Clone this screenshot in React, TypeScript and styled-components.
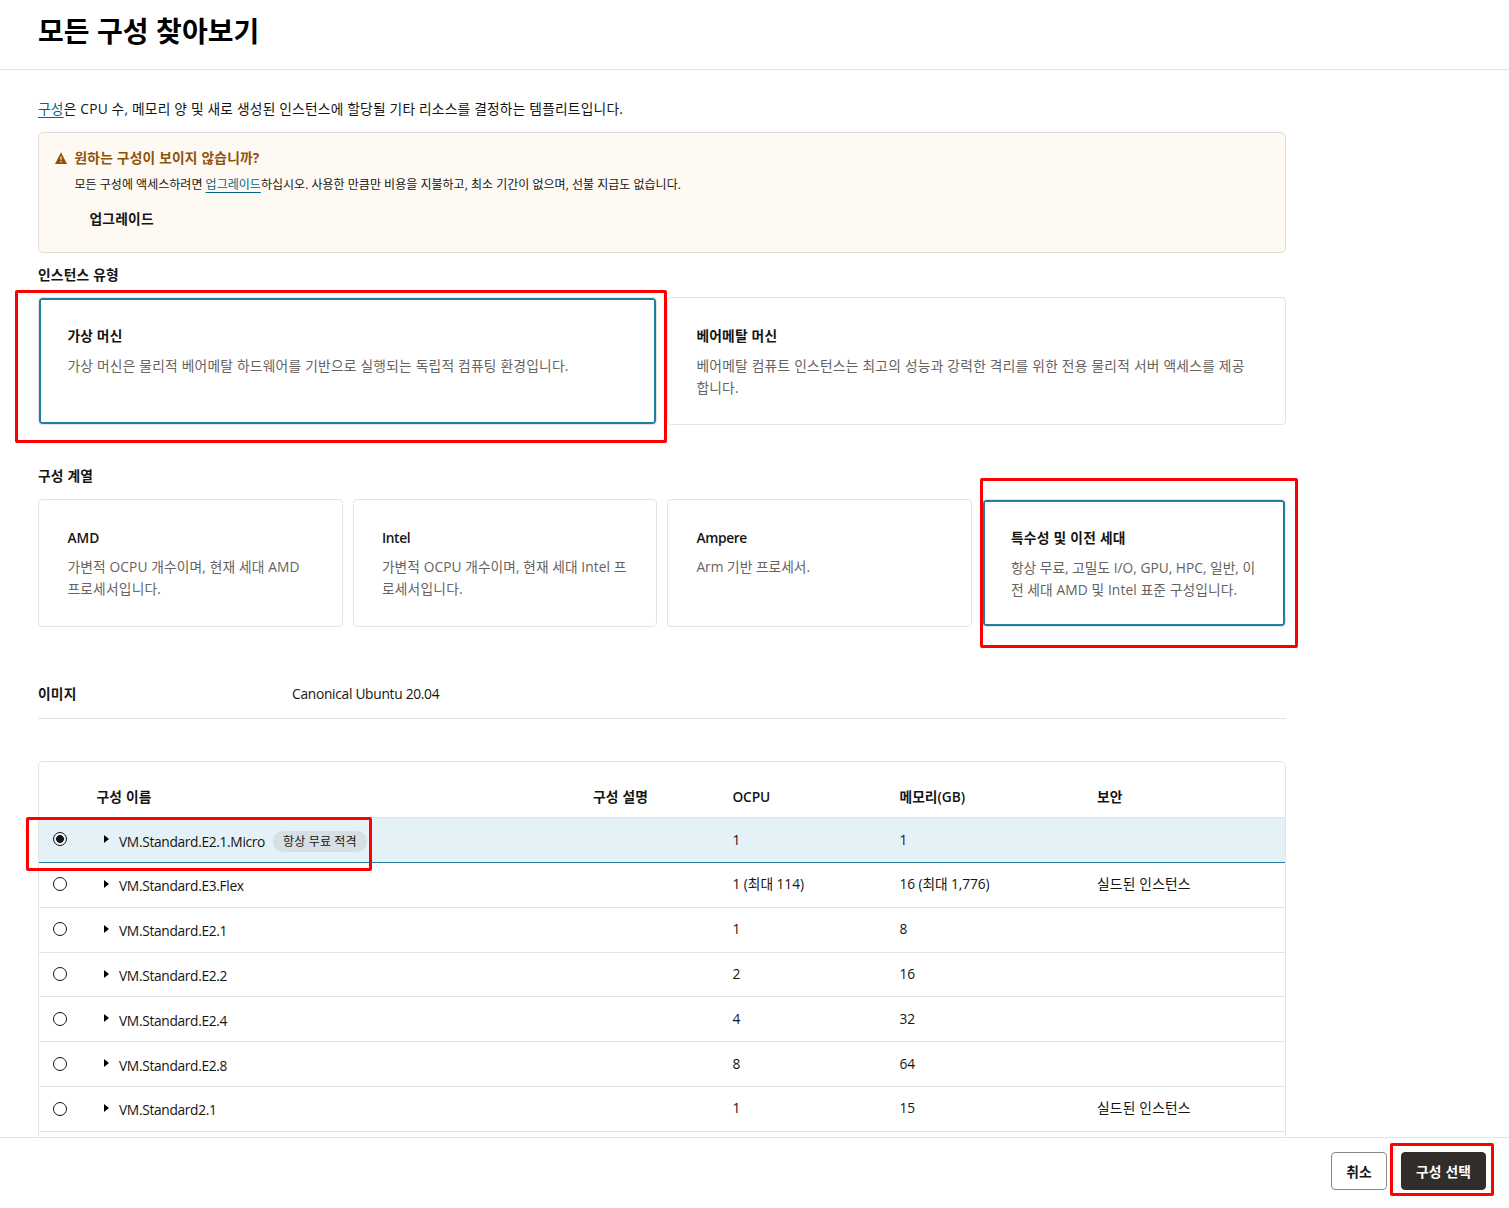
import React from 'react';
import styled, { createGlobalStyle, css } from 'styled-components';

const GlobalStyle = createGlobalStyle`
  * { box-sizing: border-box; }
  body {
    margin: 0;
    background: #fff;
    color: #161513;
    font-family: "Open Sans", "Noto Sans CJK KR", sans-serif;
    font-size: 13.76px;
  }
  p, h1, h2, h3 { margin: 0; }
`;

const line = '#e4e3e2';

type Track = { $ls?: number };
const tracking = css<Track>`
  letter-spacing: ${(p) => p.$ls ?? 0.2}px;
  white-space: nowrap;
`;

const Page = styled.div`
  position: relative;
  display: flex;
  flex-direction: column;
  width: 1509px;
  height: 1208px;
  overflow: hidden;
`;
const Header = styled.header`
  flex: none;
  height: 70px;
  padding: 11px 38px 0;
  border-bottom: 1px solid ${line};
`;
const Title = styled.h1<Track>`
  ${tracking}
  font-size: 28px;
  font-weight: 700;
  line-height: 40px;
  color: #000;
`;
const Main = styled.main`
  flex: 1;
  min-height: 0;
  width: 1324px;
  padding: 28.5px 38px 0;
  overflow: hidden;
`;
const Link = styled.a`
  color: #00688c;
  text-decoration: underline;
  text-decoration-thickness: 1px;
  text-decoration-skip-ink: none;
  text-underline-offset: 3px;
`;
const Intro = styled.p<Track>`
  ${tracking}
  height: 33.5px;
  line-height: 20px;
`;
const Notice = styled.section`
  display: flex;
  height: 121px;
  padding: 14.5px 15px 0;
  gap: 7.5px;
  border: 1px solid #dfdcd6;
  border-radius: 5px;
  background: #fef9f2;
`;
const WarningIcon = styled.svg`
  flex: none;
  width: 12px;
  height: 12px;
  margin: 4.5px 0.5px 0;
`;
const NoticeTitle = styled.h2<Track>`
  ${tracking}
  font-size: 13.76px;
  line-height: 20px;
  color: #8f520a;
`;
const NoticeText = styled.p<Track>`
  ${tracking}
  margin-top: 7.5px;
  font-size: 12px;
  line-height: 20px;
`;
const NoticeAction = styled.button<Track>`
  ${tracking}
  display: block;
  margin: 13.5px 0 0 15px;
  padding: 0;
  border: 0;
  background: none;
  font: 700 13.76px/20px "Open Sans", "Noto Sans CJK KR", sans-serif;
  color: #161513;
`;
const SectionTitle = styled.h2<Track & { $top: number; $bottom: number }>`
  ${tracking}
  margin: ${(p) => p.$top}px 0 ${(p) => p.$bottom}px;
  font-size: 13.76px;
  line-height: 20px;
`;
const CardRow = styled.div<{ $count: number }>`
  display: grid;
  grid-template-columns: repeat(${(p) => p.$count}, 1fr);
  column-gap: 10px;
`;
const Card = styled.article<{ $selected?: boolean }>`
  height: 128px;
  padding: 28px 0 0 28.4px;
  border: 1px solid ${line};
  border-radius: 4px;
  ${(p) => p.$selected && css`box-shadow: inset 0 0 0 2px #227e9e;`}
`;
const CardTitle = styled.h3<Track>`
  ${tracking}
  font-size: 13.76px;
  font-weight: 600;
  line-height: 20px;
`;
const CardLine = styled.span<Track>`
  ${tracking}
  display: block;
`;
const CardText = styled.p<{ $top: number }>`
  margin-top: ${(p) => p.$top}px;
  line-height: 22px;
  color: #66635f;
`;
const ImageRow = styled.dl`
  display: flex;
  height: 35px;
  margin: 57px 0 42px;
  border-bottom: 1px solid ${line};
  line-height: 20px;
`;
const ImageLabel = styled.dt<Track>`
  ${tracking}
  width: 254px;
  font-weight: 700;
`;
const ImageValue = styled.dd<Track>`
  ${tracking}
  margin: 0;
`;
const Table = styled.div`
  border: 1px solid ${line};
  border-radius: 5px 5px 0 0;
`;
const columns = css`
  display: grid;
  grid-template-columns: 57.5px 496.5px 139.5px 167px 197.5px 1fr;
`;
const HeadRow = styled.div`
  ${columns}
  height: 56px;
  padding-top: 25px;
  border-bottom: 1px solid ${line};
  line-height: 20px;
`;
const HeadCell = styled.div<Track>`
  ${tracking}
  font-weight: 600;
`;
const Radio = styled.span`
  display: block;
  width: 14px;
  height: 14px;
  margin: 14.5px 0 0 14px;
  border: 1.2px solid #161513;
  border-radius: 50%;
`;
const RadioChecked = styled(Radio)`
  margin-top: 14px;
  background: radial-gradient(circle, #161513 3.6px, transparent 4.2px);
`;
const NameCell = styled.div`
  display: flex;
  align-items: flex-start;
  padding-left: 7.5px;
`;
const Caret = styled.span`
  margin: 17px 10px 0 0;
  border: solid transparent;
  border-width: 4.5px 0 4.5px 5px;
  border-left-color: #000;
`;
const Name = styled.span<Track>`
  ${tracking}
  margin-top: 13.3px;
  line-height: 20px;
`;
const Badge = styled.span<Track>`
  ${tracking}
  height: 21px;
  margin: 13px 0 0 8px;
  padding: 0 10px;
  border-radius: 11px;
  background: #d5dfe4;
  font-size: 12px;
  line-height: 21.5px;
`;
const Cell = styled.div<Track>`
  ${tracking}
  padding-top: 11.3px;
  line-height: 20px;
`;
const Row = styled.div<{ $selected?: boolean }>`
  ${columns}
  height: 44.85px;
  border-bottom: 1px solid ${line};
  ${(p) => p.$selected && css`
    border-bottom-color: #227e9e;
    background: #e4f1f7;
    ${Name} { margin-top: 14px; }
    ${Cell} { padding-top: 12px; }
    ${Caret} { margin-top: 16.5px; }
  `}
`;
const Footer = styled.footer`
  flex: none;
  display: flex;
  justify-content: flex-end;
  gap: 14px;
  height: 71px;
  padding: 14px 23px 0 0;
  border-top: 1px solid ${line};
`;
const Button = styled.button<Track & { $primary?: boolean }>`
  ${tracking}
  width: ${(p) => (p.$primary ? 85 : 56)}px;
  height: 38px;
  padding: 1px 0 0;
  border: 1px solid ${(p) => (p.$primary ? '#312d2a' : '#8b8885')};
  border-radius: 4px;
  background: ${(p) => (p.$primary ? '#312d2a' : '#fff')};
  color: ${(p) => (p.$primary ? '#fff' : '#161513')};
  font: 700 13.76px/20px "Open Sans", "Noto Sans CJK KR", sans-serif;
`;
const Highlight = styled.div<{ $x: number; $y: number; $w: number; $h: number }>`
  position: absolute;
  left: ${(p) => p.$x}px;
  top: ${(p) => p.$y}px;
  width: ${(p) => p.$w}px;
  height: ${(p) => p.$h}px;
  border: 3px solid #fe0000;
  border-radius: 2px;
  pointer-events: none;
`;

const rows = [
  { name: 'VM.Standard.E2.1.Micro', badge: '항상 무료 적격', ocpu: '1', memory: '1', selected: true },
  { name: 'VM.Standard.E3.Flex', ocpu: '1 (최대 114)', memory: '16 (최대 1,776)', security: '실드된 인스턴스' },
  { name: 'VM.Standard.E2.1', ocpu: '1', memory: '8' },
  { name: 'VM.Standard.E2.2', ocpu: '2', memory: '16' },
  { name: 'VM.Standard.E2.4', ocpu: '4', memory: '32' },
  { name: 'VM.Standard.E2.8', ocpu: '8', memory: '64' },
  { name: 'VM.Standard2.1', ocpu: '1', memory: '15', security: '실드된 인스턴스' },
  { name: '', ocpu: '', memory: '' },
];

export default function App() {
  return (
    <Page>
      <GlobalStyle />
      <Header>
        <Title $ls={0.08}>모든 구성 찾아보기</Title>
      </Header>
      <Main>
        <Intro $ls={0.195}>
          <Link href="#">구성</Link>은 CPU 수, 메모리 양 및 새로 생성된 인스턴스에 할당될 기타 리소스를 결정하는 템플리트입니다.
        </Intro>
        <Notice>
          <WarningIcon viewBox="0 0 12 12">
            <path d="M6 0.3 12 12H0Z" fill="#8f520a" />
            <path d="M6 4.6v3.2M6 8.9V10.2" stroke="#fef9f2" strokeWidth="1.2" />
          </WarningIcon>
          <div>
            <NoticeTitle>원하는 구성이 보이지 않습니까?</NoticeTitle>
            <NoticeText $ls={0.02}>
              모든 구성에 액세스하려면 <Link href="#">업그레이드</Link>하십시오. 사용한 만큼만 비용을 지불하고, 최소 기간이 없으며, 선불 지급도 없습니다.
            </NoticeText>
            <NoticeAction>업그레이드</NoticeAction>
          </div>
        </Notice>
        <SectionTitle $top={11.5} $bottom={12.5}>인스턴스 유형</SectionTitle>
        <CardRow $count={2}>
          <Card $selected>
            <CardTitle>가상 머신</CardTitle>
            <CardText $top={8.5}>
              <CardLine $ls={0.22}>가상 머신은 물리적 베어메탈 하드웨어를 기반으로 실행되는 독립적 컴퓨팅 환경입니다.</CardLine>
            </CardText>
          </Card>
          <Card>
            <CardTitle>베어메탈 머신</CardTitle>
            <CardText $top={8.5}>
              <CardLine $ls={0.235}>베어메탈 컴퓨트 인스턴스는 최고의 성능과 강력한 격리를 위한 전용 물리적 서버 액세스를 제공</CardLine>
              <CardLine>합니다.</CardLine>
            </CardText>
          </Card>
        </CardRow>
        <SectionTitle $top={40.5} $bottom={13.5}>구성 계열</SectionTitle>
        <CardRow $count={4}>
          <Card>
            <CardTitle $ls={0}>AMD</CardTitle>
            <CardText $top={8}>
              <CardLine $ls={0.12}>가변적 OCPU 개수이며, 현재 세대 AMD</CardLine>
              <CardLine>프로세서입니다.</CardLine>
            </CardText>
          </Card>
          <Card>
            <CardTitle $ls={-0.35}>Intel</CardTitle>
            <CardText $top={8}>
              <CardLine $ls={0.06}>가변적 OCPU 개수이며, 현재 세대 Intel 프</CardLine>
              <CardLine>로세서입니다.</CardLine>
            </CardText>
          </Card>
          <Card>
            <CardTitle $ls={-0.33}>Ampere</CardTitle>
            <CardText $top={8}>
              <CardLine $ls={0}>Arm 기반 프로세서.</CardLine>
            </CardText>
          </Card>
          <Card $selected>
            <CardTitle $ls={0.27}>특수성 및 이전 세대</CardTitle>
            <CardText $top={9}>
              <CardLine $ls={0}>항상 무료, 고밀도 I/O, GPU, HPC, 일반, 이</CardLine>
              <CardLine $ls={0.1}>전 세대 AMD 및 Intel 표준 구성입니다.</CardLine>
            </CardText>
          </Card>
        </CardRow>
        <ImageRow>
          <ImageLabel>이미지</ImageLabel>
          <ImageValue $ls={-0.28}>Canonical Ubuntu 20.04</ImageValue>
        </ImageRow>
        <Table>
          <HeadRow>
            <HeadCell />
            <HeadCell>구성 이름</HeadCell>
            <HeadCell>구성 설명</HeadCell>
            <HeadCell $ls={-0.2}>OCPU</HeadCell>
            <HeadCell $ls={0}>메모리(GB)</HeadCell>
            <HeadCell>보안</HeadCell>
          </HeadRow>
          {rows.map((r) => (
            <Row key={r.name} $selected={r.selected}>
              {r.selected ? <RadioChecked /> : <Radio />}
              <NameCell>
                <Caret />
                <Name $ls={-0.33}>{r.name}</Name>
                {r.badge && <Badge $ls={0.15}>{r.badge}</Badge>}
              </NameCell>
              <Cell />
              <Cell $ls={-0.05}>{r.ocpu}</Cell>
              <Cell $ls={-0.1}>{r.memory}</Cell>
              <Cell>{r.security}</Cell>
            </Row>
          ))}
        </Table>
      </Main>
      <Footer>
        <Button>취소</Button>
        <Button $primary>구성 선택</Button>
      </Footer>
      <Highlight $x={15} $y={290} $w={652} $h={153} />
      <Highlight $x={980} $y={478} $w={318} $h={170} />
      <Highlight $x={26} $y={817} $w={346} $h={54} />
      <Highlight $x={1390} $y={1143} $w={104} $h={53} />
    </Page>
  );
}
